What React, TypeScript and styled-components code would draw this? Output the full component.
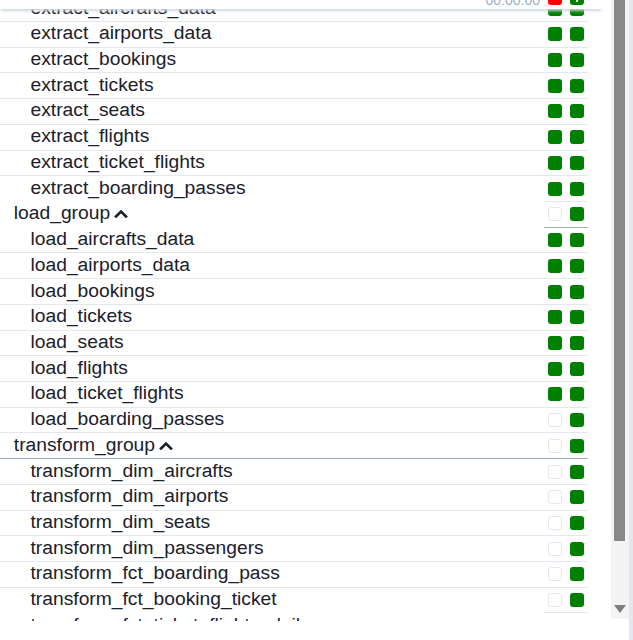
import React from 'react';
import styled, { createGlobalStyle } from 'styled-components';

const GlobalStyle = createGlobalStyle`
  html, body { margin: 0; padding: 0; background: #ffffff; }
  body { font-family: "Liberation Sans", Arial, sans-serif; }
`;

type State = 'success' | 'empty' | 'failed';
type Border = 'light' | 'dark' | 'none';

interface RowData {
  name: string;
  group?: boolean;
  cells?: State[];
  nameBorder: Border;
  gridBorder: Border;
}

const ROW_H = 25.73;

const Page = styled.div`
  display: flex;
  width: 633px;
  height: 640px;
  overflow: hidden;
  background: #ffffff;
`;

const Main = styled.div`
  width: 611px;
  height: 621px;
  display: flex;
  flex-direction: column;
  overflow: hidden;
`;

const Header = styled.div`
  position: relative;
  z-index: 1;
  flex: none;
  width: 602px;
  height: 9px;
  background: #ffffff;
  box-shadow: 0 3px 3px -1px rgba(203, 213, 224, 0.95);
  display: flex;
  align-items: flex-end;
  overflow: hidden;
`;

const HeaderLabel = styled.div`
  width: 544px;
  box-sizing: border-box;
  padding-right: 4px;
  margin-bottom: 2px;
  text-align: right;
  font-size: 14px;
  line-height: 14px;
  color: #a0aec0;
`;

const HeaderCells = styled.div`
  display: flex;
  padding-bottom: 4px;
`;

const Viewport = styled.div`
  flex: 1;
  overflow: hidden;
`;

const List = styled.div`
  margin-top: -12.77px;
  width: 588px;
`;

const Row = styled.div`
  display: flex;
  height: ${ROW_H}px;
`;

const borderColor = (b: Border) =>
  b === 'light' ? '#e2e8f0' : b === 'dark' ? '#a0aec0' : 'transparent';

const NameCell = styled.div<{ $border: Border; $group?: boolean }>`
  width: 544px;
  box-sizing: border-box;
  border-bottom: 1px solid ${(p) => borderColor(p.$border)};
  display: flex;
  align-items: center;
  gap: 4px;
  padding-left: ${(p) => (p.$group ? '13.8px' : '30.5px')};
  padding-bottom: 2px;
  font-size: 19.25px;
  color: #1a202c;
  white-space: nowrap;
`;

const GridCell = styled.div<{ $border: Border }>`
  width: 44px;
  box-sizing: border-box;
  border-bottom: 1px solid ${(p) => borderColor(p.$border)};
  display: flex;
  align-items: center;
`;

const Slot = styled.div`
  width: 22px;
  display: flex;
  justify-content: center;
`;

const Square = styled.div<{ $state: State }>`
  width: 14px;
  height: 14px;
  box-sizing: border-box;
  border-radius: 3px;
  position: relative;
  background: ${(p) =>
    p.$state === 'success' ? '#008000' : p.$state === 'failed' ? '#ff0000' : '#ffffff'};
  border: ${(p) => (p.$state === 'empty' ? '1px solid #e2e8f0' : 'none')};
`;

const Chevron = styled.svg`
  width: 14px;
  height: 10px;
  flex: none;
`;

const ScrollCol = styled.div`
  width: 18px;
  height: 619px;
  box-sizing: border-box;
  padding: 0 4px 0 3px;
  background: #f4f4f4;
  display: flex;
  flex-direction: column;
`;

const Thumb = styled.div`
  height: 541px;
  background: #898989;
`;

const ArrowArea = styled.div`
  flex: 1;
  display: flex;
  align-items: flex-end;
  justify-content: center;
  padding-bottom: 6px;
`;

const ArrowDown = styled.div`
  width: 0;
  height: 0;
  border-left: 6px solid transparent;
  border-right: 6px solid transparent;
  border-top: 8px solid #7f7f7f;
`;

const Strip = styled.div`
  width: 4px;
  height: 640px;
  background: #e2e8f0;
`;

const S: State = 'success';
const E: State = 'empty';

const rows: RowData[] = [
  { name: 'extract_aircrafts_data', cells: [S, S], nameBorder: 'light', gridBorder: 'light' },
  { name: 'extract_airports_data', cells: [S, S], nameBorder: 'light', gridBorder: 'light' },
  { name: 'extract_bookings', cells: [S, S], nameBorder: 'light', gridBorder: 'light' },
  { name: 'extract_tickets', cells: [S, S], nameBorder: 'light', gridBorder: 'light' },
  { name: 'extract_seats', cells: [S, S], nameBorder: 'light', gridBorder: 'light' },
  { name: 'extract_flights', cells: [S, S], nameBorder: 'light', gridBorder: 'light' },
  { name: 'extract_ticket_flights', cells: [S, S], nameBorder: 'light', gridBorder: 'light' },
  { name: 'extract_boarding_passes', cells: [S, S], nameBorder: 'none', gridBorder: 'light' },
  { name: 'load_group', group: true, cells: [E, S], nameBorder: 'none', gridBorder: 'dark' },
  { name: 'load_aircrafts_data', cells: [S, S], nameBorder: 'light', gridBorder: 'light' },
  { name: 'load_airports_data', cells: [S, S], nameBorder: 'light', gridBorder: 'light' },
  { name: 'load_bookings', cells: [S, S], nameBorder: 'light', gridBorder: 'light' },
  { name: 'load_tickets', cells: [S, S], nameBorder: 'light', gridBorder: 'light' },
  { name: 'load_seats', cells: [S, S], nameBorder: 'light', gridBorder: 'light' },
  { name: 'load_flights', cells: [S, S], nameBorder: 'light', gridBorder: 'light' },
  { name: 'load_ticket_flights', cells: [S, S], nameBorder: 'light', gridBorder: 'light' },
  { name: 'load_boarding_passes', cells: [E, S], nameBorder: 'light', gridBorder: 'light' },
  { name: 'transform_group', group: true, cells: [E, S], nameBorder: 'dark', gridBorder: 'dark' },
  { name: 'transform_dim_aircrafts', cells: [E, S], nameBorder: 'light', gridBorder: 'light' },
  { name: 'transform_dim_airports', cells: [E, S], nameBorder: 'light', gridBorder: 'light' },
  { name: 'transform_dim_seats', cells: [E, S], nameBorder: 'light', gridBorder: 'light' },
  { name: 'transform_dim_passengers', cells: [E, S], nameBorder: 'light', gridBorder: 'light' },
  { name: 'transform_fct_boarding_pass', cells: [E, S], nameBorder: 'light', gridBorder: 'light' },
  { name: 'transform_fct_booking_ticket', cells: [E, S], nameBorder: 'none', gridBorder: 'light' },
  { name: 'transform_fct_ticket_flights_daily', nameBorder: 'none', gridBorder: 'none' },
];

const ChevronUp = () => (
  <Chevron viewBox="0 0 14 10">
    <polyline
      points="2,8.5 7,3.5 12,8.5"
      fill="none"
      stroke="#1a202c"
      strokeWidth="2.6"
      strokeLinecap="square"
      strokeLinejoin="miter"
    />
  </Chevron>
);

export default function App() {
  return (
    <>
      <GlobalStyle />
      <Page>
        <Main>
          <Header>
            <HeaderLabel>00:00:00</HeaderLabel>
            <HeaderCells>
              <Slot>
                <Square $state="failed" />
              </Slot>
              <Slot>
                <Square $state="success">
                  <svg width="14" height="14" viewBox="0 0 14 14" style={{ display: 'block' }}>
                    <path d="M9.5 4 L6.5 11" stroke="#ffffff" strokeWidth="1.6" fill="none" />
                  </svg>
                </Square>
              </Slot>
            </HeaderCells>
          </Header>
          <Viewport>
            <List>
              {rows.map((r) => (
                <Row key={r.name}>
                  <NameCell $border={r.nameBorder} $group={r.group}>
                    {r.name}
                    {r.group && <ChevronUp />}
                  </NameCell>
                  <GridCell $border={r.gridBorder}>
                    {(r.cells || []).map((c, i) => (
                      <Slot key={i}>
                        <Square $state={c} />
                      </Slot>
                    ))}
                  </GridCell>
                </Row>
              ))}
            </List>
          </Viewport>
        </Main>
        <ScrollCol>
          <Thumb />
          <ArrowArea>
            <ArrowDown />
          </ArrowArea>
        </ScrollCol>
        <Strip />
      </Page>
    </>
  );
}
